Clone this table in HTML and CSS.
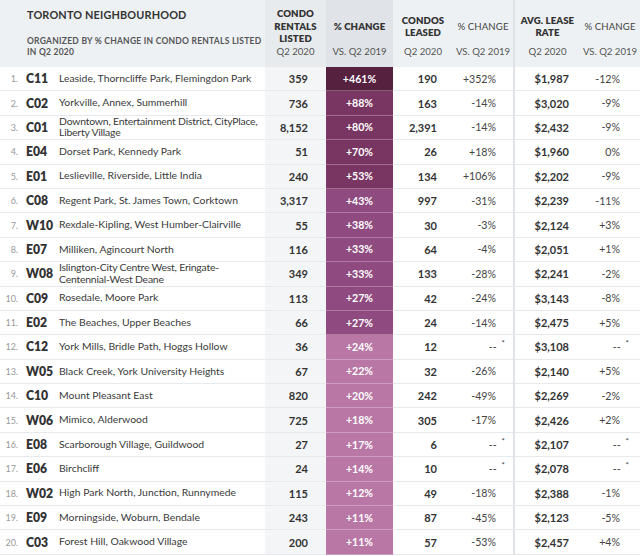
FILE: index.html
```html
<!DOCTYPE html>
<html>
<head>
<meta charset="utf-8">
<link rel="stylesheet" href="styles.css">
</head>
<body>
<div class="table">
  <div class="head">
    <div class="h-left">
      <div class="h-title">TORONTO NEIGHBOURHOOD</div>
      <div class="h-sub">ORGANIZED BY % CHANGE IN CONDO RENTALS LISTED IN Q2 2020</div>
    </div>
    <div class="h-col c-rent"><div class="h-name">CONDO<br>RENTALS<br>LISTED</div><div class="h-period">Q2 2020</div></div>
    <div class="h-col c-pct"><div class="h-name">% CHANGE</div><div class="h-period">VS. Q2 2019</div></div>
    <div class="h-col"><div class="h-name">CONDOS<br>LEASED</div><div class="h-period">Q2 2020</div></div>
    <div class="h-col"><div class="h-name light">% CHANGE</div><div class="h-period">VS. Q2 2019</div></div>
    <div class="h-col sep"><div class="h-name">AVG. LEASE<br>RATE</div><div class="h-period">Q2 2020</div></div>
    <div class="h-col"><div class="h-name light">% CHANGE</div><div class="h-period">VS. Q2 2019</div></div>
  </div>
  <div id="body"></div>
</div>
<script src="app.js"></script>
</body>
</html>
```
FILE: app.js
```js
const rows = [
  ["C11","Leaside, Thorncliffe Park, Flemingdon Park","359","+461%","190","+352%","$1,987","-12%",1],
  ["C02","Yorkville, Annex, Summerhill","736","+88%","163","-14%","$3,020","-9%",2],
  ["C01","Downtown, Entertainment District, CityPlace,<br>Liberty Village","8,152","+80%","2,391","-14%","$2,432","-9%",2],
  ["E04","Dorset Park, Kennedy Park","51","+70%","26","+18%","$1,960","0%",2],
  ["E01","Leslieville, Riverside, Little India","240","+53%","134","+106%","$2,202","-9%",2],
  ["C08","Regent Park, St. James Town, Corktown","3,317","+43%","997","-31%","$2,239","-11%",3],
  ["W10","Rexdale-Kipling, West Humber-Clairville","55","+38%","30","-3%","$2,124","+3%",3],
  ["E07","Milliken, Agincourt North","116","+33%","64","-4%","$2,051","+1%",3],
  ["W08","Islington-City Centre West, Eringate-<br>Centennial-West Deane","349","+33%","133","-28%","$2,241","-2%",3],
  ["C09","Rosedale, Moore Park","113","+27%","42","-24%","$3,143","-8%",3],
  ["E02","The Beaches, Upper Beaches","66","+27%","24","-14%","$2,475","+5%",3],
  ["C12","York Mills, Bridle Path, Hoggs Hollow","36","+24%","12","--*","$3,108","--*",4],
  ["W05","Black Creek, York University Heights","67","+22%","32","-26%","$2,140","+5%",4],
  ["C10","Mount Pleasant East","820","+20%","242","-49%","$2,269","-2%",4],
  ["W06","Mimico, Alderwood","725","+18%","305","-17%","$2,426","+2%",4],
  ["E08","Scarborough Village, Guildwood","27","+17%","6","--*","$2,107","--*",4],
  ["E06","Birchcliff","24","+14%","10","--*","$2,078","--*",4],
  ["W02","High Park North, Junction, Runnymede","115","+12%","49","-18%","$2,388","-1%",4],
  ["E09","Morningside, Woburn, Bendale","243","+11%","87","-45%","$2,123","-5%",4],
  ["C03","Forest Hill, Oakwood Village","200","+11%","57","-53%","$2,457","+4%",4]
];
const pc = v => v === "--*" ? '--<span class="ast">*</span>' : v;
document.getElementById("body").innerHTML = rows.map((r, i) => `
<div class="row">
  <div class="cell rank">${i + 1}.</div>
  <div class="cell code">${r[0]}</div>
  <div class="cell name${r[1].includes("<br>") ? " two" : ""}"><span>${r[1]}</span></div>
  <div class="cell num c-rent">${r[2]}</div>
  <div class="cell pct tier${r[8]}">${r[3]}</div>
  <div class="cell num">${r[4]}</div>
  <div class="cell chg">${pc(r[5])}</div>
  <div class="cell num rate sep">${r[6]}</div>
  <div class="cell chg">${pc(r[7])}</div>
</div>`).join("");
```
FILE: styles.css
```css
html, body { margin: 0; padding: 0; background: #fff; }
body { font-family: Lato, "Noto Sans", sans-serif; color: #333; width: 640px; }

.head, .row {
  display: grid;
  grid-template-columns: 22px 37px 206px 61px 67px 60px 60px 67px 60px;
}

.head { background: #eef1f4; height: 67px; }
.h-left { grid-column: 1 / 4; padding: 8px 0 0 27px; }
.h-title { font-weight: 700; font-size: 10.9px; line-height: 14px; color: #333; letter-spacing: 0.15px; margin-bottom: 13.5px; }
.h-sub { font-weight: 700; font-size: 8.5px; line-height: 11px; color: #555; width: 236px; letter-spacing: 0.25px; }

.h-col { display: flex; flex-direction: column; align-items: center; text-align: center; padding-top: 8px; }
.h-name { height: 38px; display: flex; align-items: center; justify-content: center; font-weight: 800; font-size: 9.6px; line-height: 12.5px; color: #333; letter-spacing: 0.1px; }
.h-name.light { font-weight: 400; color: #444; }
.h-period { font-size: 9.6px; line-height: 12px; color: #555; }
.head .c-rent { background: #e8ebee; }
.head .c-pct { background: #e0e3e7; }

.sep { border-left: 2px solid #dfe3e8; }

.row { height: 24.4px; }
.cell { display: flex; align-items: center; border-bottom: 1px solid #e6e9ed; box-sizing: border-box; min-width: 0; }
.rank { justify-content: flex-end; padding-right: 4px; font-size: 9px; color: #999; }
.code { padding-left: 4px; font-weight: 800; font-size: 12.2px; color: #333; }
.name { font-size: 10.4px; line-height: 11.7px; color: #3a3a3a; white-space: nowrap; }
.name.two { letter-spacing: -0.2px; }
.num { justify-content: flex-end; padding-right: 16px; font-weight: 700; font-size: 11px; color: #333; }
.row .c-rent { background: #f4f5f7; padding-right: 18px; }
.rate { padding-right: 11px; }
.chg { justify-content: flex-end; padding-right: 17px; font-size: 10.6px; color: #444; }
.row .chg:last-child { padding-right: 20px; }
.ast { font-size: 8px; position: relative; top: -4px; margin-right: -9px; margin-left: 5px; }

.pct { justify-content: center; color: #fff; font-size: 10.6px; font-weight: 700; border-bottom-color: rgba(255,255,255,0.28); }
.tier1 { background: #56203f; }
.tier2 { background: #7a3662; }
.tier3 { background: #8f4a80; }
.tier4 { background: #b977a5; }
```
